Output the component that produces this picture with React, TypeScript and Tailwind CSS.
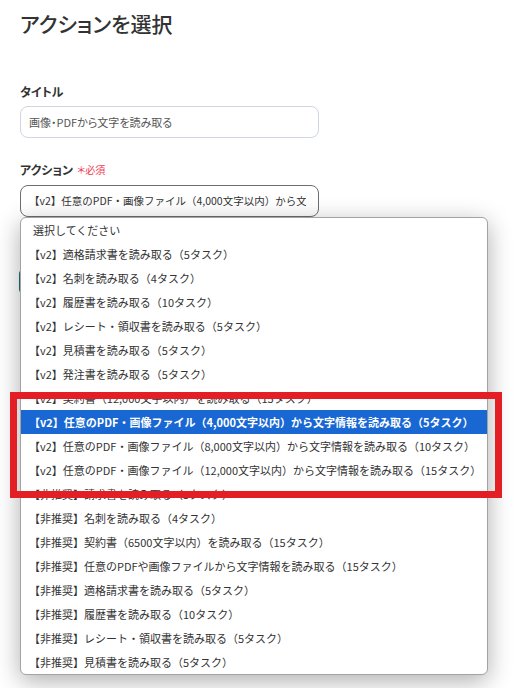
import React from 'react'

const options = [
  '【v2】適格請求書を読み取る（5タスク）',
  '【v2】名刺を読み取る（4タスク）',
  '【v2】履歴書を読み取る（10タスク）',
  '【v2】レシート・領収書を読み取る（5タスク）',
  '【v2】見積書を読み取る（5タスク）',
  '【v2】発注書を読み取る（5タスク）',
  '【v2】契約書（12,000文字以内）を読み取る（15タスク）',
  '【v2】任意のPDF・画像ファイル（4,000文字以内）から文字情報を読み取る（5タスク）',
  '【v2】任意のPDF・画像ファイル（8,000文字以内）から文字情報を読み取る（10タスク）',
  '【v2】任意のPDF・画像ファイル（12,000文字以内）から文字情報を読み取る（15タスク）',
  '【非推奨】請求書を読み取る（5タスク）',
  '【非推奨】名刺を読み取る（4タスク）',
  '【非推奨】契約書（6500文字以内）を読み取る（15タスク）',
  '【非推奨】任意のPDFや画像ファイルから文字情報を読み取る（15タスク）',
  '【非推奨】適格請求書を読み取る（5タスク）',
  '【非推奨】履歴書を読み取る（10タスク）',
  '【非推奨】レシート・領収書を読み取る（5タスク）',
  '【非推奨】見積書を読み取る（5タスク）',
]

const selected = 7

export default function App() {
  return (
    <div className="relative min-h-screen bg-white font-['Noto_Sans_CJK_JP','Noto_Sans',sans-serif] text-[#333333]">
      <div className="px-5 pt-2">
        <h1 className="text-[21px] font-medium leading-[30px] [font-feature-settings:'palt']">
          アクションを選択
        </h1>

        {/* Title field */}
        <div className="mt-[46px] text-[12px] font-bold leading-4 [font-feature-settings:'palt']">
          タイトル
        </div>
        <div className="mt-1.5 flex h-8 w-[299px] items-center rounded-lg border border-[#cfd6e0] px-2 text-[11px] text-[#555555] [font-feature-settings:'palt']">
          画像・PDFから文字を読み取る
        </div>

        {/* Action select */}
        <div className="mt-6 flex items-center gap-1 text-[12px] font-bold leading-4 [font-feature-settings:'palt']">
          アクション
          <span className="text-[10px] font-normal text-[#ef3b55]">＊必須</span>
        </div>
        <div className="relative mt-[7px]">
          <div className="flex h-8 w-[299px] items-center rounded-lg border border-[#6e6e6e] pl-2 pr-3">
            <div className="min-w-0 overflow-hidden whitespace-nowrap text-[10.5px]">
              {options[selected]}
            </div>
          </div>

          {/* native select popup */}
          <div className="absolute left-0 top-full z-10 w-[468px] overflow-hidden rounded-md border border-[#a3a3a3] bg-white shadow-[0_6px_24px_rgba(0,0,0,0.32)]">
            <div className="h-6 whitespace-nowrap px-3 text-[11px] leading-6">選択してください</div>
            {options.map((o, i) => (
              <div
                key={o}
                className={
                  i === selected
                    ? 'h-6 whitespace-nowrap bg-[#1967d2] px-2 text-[11px] font-bold leading-6 text-white'
                    : 'h-6 whitespace-nowrap px-2 text-[11px] leading-6'
                }
              >
                {o}
              </div>
            ))}
          </div>
        </div>

        {/* content behind the popup */}
        <div className="-ml-px mt-[53px] h-[23px] w-[140px] rounded bg-[#1f6e78]" />
      </div>

      {/* annotation */}
      <div className="pointer-events-none absolute left-[10px] top-[392px] z-20 h-[106px] w-[492px] border-[7px] border-[#e31e24]" />
    </div>
  )
}
